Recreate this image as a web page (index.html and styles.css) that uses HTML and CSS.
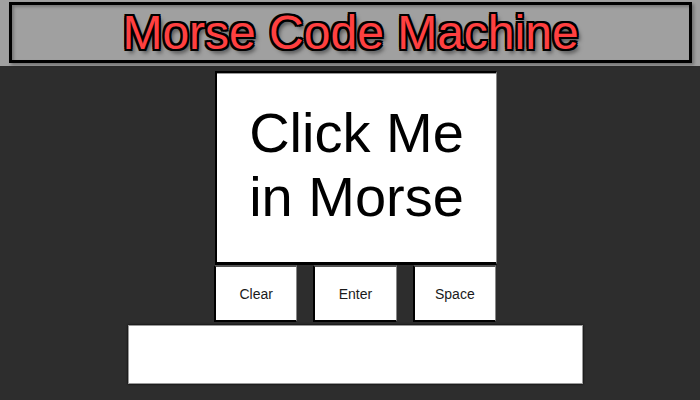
FILE: index.html
```html
<!DOCTYPE html>
<html>
<head>
<meta charset="utf-8">
<link rel="stylesheet" href="styles.css">
</head>
<body>
<header class="header">
  <div class="title-box">
    <h1 class="title">Morse Code Machine</h1>
  </div>
</header>
<main class="machine">
  <div class="morse-key">Click Me<br>in Morse</div>
  <div class="controls">
    <button class="ctrl">Clear</button>
    <button class="ctrl">Enter</button>
    <button class="ctrl">Space</button>
  </div>
  <div class="output"></div>
</main>
</body>
</html>
```
FILE: styles.css
```css
html, body {
  margin: 0;
  padding: 0;
}
body {
  background: #2d2d2d;
  font-family: "Liberation Sans", Arial, sans-serif;
  width: 700px;
  height: 400px;
  overflow: hidden;
}
.header {
  background: #a0a0a0;
  height: 66px;
  box-sizing: border-box;
  padding: 2px 8px 3px 9px;
}
.title-box {
  height: 61px;
  box-sizing: border-box;
  border: 3px solid #000;
  box-shadow: inset 2px 2px 3px rgba(0,0,0,0.25), 2px 2px 3px rgba(0,0,0,0.3);
  display: flex;
  justify-content: center;
}
.title {
  margin: 0;
  font-size: 48px;
  font-weight: normal;
  line-height: 55px;
  color: #ff4040;
  text-shadow:
    -2px -2px 0 #000, 0 -2px 0 #000, 2px -2px 0 #000,
    -2px 0 0 #000, 2px 0 0 #000,
    -2px 2px 0 #000, 0 2px 0 #000, 2px 2px 0 #000,
    3px 4px 4px rgba(0,0,0,0.6);
}
.machine {
  display: flex;
  flex-direction: column;
  align-items: center;
  padding-left: 10px;
}
.morse-key {
  margin-top: 5px;
  margin-left: 2px;
  width: 282px;
  height: 194px;
  box-sizing: border-box;
  padding-bottom: 6px;
  background: #fff;
  border-top: 2px solid #000;
  border-left: 2px solid #000;
  border-bottom: 3px solid #000;
  border-right: 1px solid #888;
  box-shadow: inset 0 1px 0 #999;
  font-size: 56px;
  line-height: 64px;
  color: #000;
  text-align: center;
  display: flex;
  align-items: center;
  justify-content: center;
}
.controls {
  display: flex;
  gap: 16px;
  width: 282px;
  height: 57px;
}
.ctrl {
  flex: 1;
  margin: 0;
  padding: 0;
  background: #fff;
  border-top: 2px solid #555;
  border-right: 1px solid #888;
  border-left: 2px solid #000;
  border-bottom: 2px solid #000;
  font-family: "Liberation Sans", Arial, sans-serif;
  font-size: 14px;
  color: #1a1a1a;
}
.output {
  margin-top: 3px;
  width: 455px;
  height: 59px;
  box-sizing: border-box;
  background: #fff;
  border: 1px solid #9a9a9a;
  box-shadow: 0 0 2px #000;
}
```
